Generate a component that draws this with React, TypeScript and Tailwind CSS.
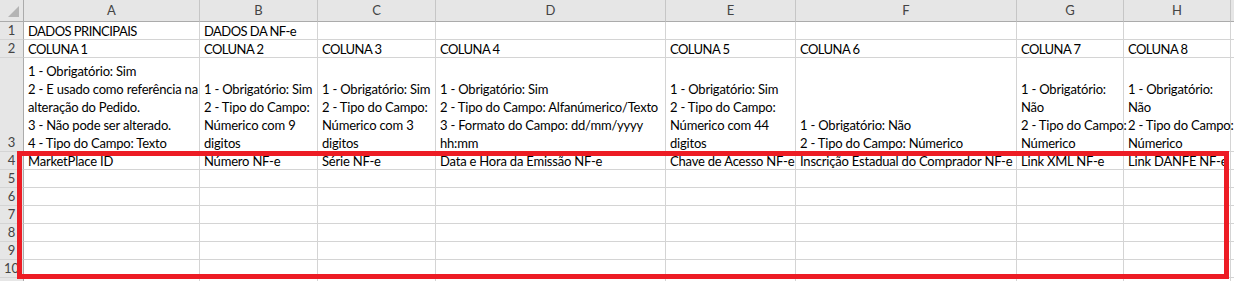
import React from "react";

const cols = ["A", "B", "C", "D", "E", "F", "G", "H"];

const row3: string[][] = [
  [
    "1 - Obrigatório: Sim",
    "2 - E usado como referência na",
    "alteração do Pedido.",
    "3 - Não pode ser alterado.",
    "4 - Tipo do Campo: Texto",
  ],
  ["1 - Obrigatório: Sim", "2 - Tipo do Campo:", "Númerico com 9", "digitos"],
  ["1 - Obrigatório: Sim", "2 - Tipo do Campo:", "Númerico com 3", "digitos"],
  [
    "1 - Obrigatório: Sim",
    "2 - Tipo do Campo: Alfanúmerico/Texto",
    "3 - Formato do Campo: dd/mm/yyyy",
    "hh:mm",
  ],
  ["1 - Obrigatório: Sim", "2 - Tipo do Campo:", "Númerico com 44", "digitos"],
  ["1 - Obrigatório: Não", "2 - Tipo do Campo: Númerico"],
  ["1 - Obrigatório:", "Não", "2 - Tipo do Campo:", "Númerico"],
  ["1 - Obrigatório:", "Não", "2 - Tipo do Campo:", "Númerico"],
];

const row1 = ["DADOS PRINCIPAIS", "DADOS DA NF-e", "", "", "", "", "", ""];
const row2 = cols.map((_, i) => `COLUNA ${i + 1}`);
const row4 = [
  "MarketPlace ID",
  "Número NF-e",
  "Série NF-e",
  "Data e Hora da Emissão NF-e",
  "Chave de Acesso NF-e",
  "Inscrição Estadual do Comprador NF-e",
  "Link XML NF-e",
  "Link DANFE NF-e",
];

function RowHead({ n, h }: { n: number | null; h: string }) {
  return (
    <div
      className={`${h} flex items-end justify-center border-r border-b border-r-[#ababab] border-b-[#d4d4d4] bg-[#e6e6e6] text-[#444] leading-[17px]`}
    >
      {n}
    </div>
  );
}

function Cell({ lines, h, caps }: { lines: string[]; h: string; caps?: boolean }) {
  return (
    <div
      className={`${h} flex flex-col justify-end overflow-visible whitespace-nowrap border-r border-b border-[#d4d4d4] pl-[4px] text-black leading-[18px] ${
        caps ? "tracking-[-0.55px]" : "tracking-[-0.2px]"
      }`}
    >
      <div className="translate-y-[1px]">
        {lines.map((l, i) => (
          <div key={i}>{l || "\u00a0"}</div>
        ))}
      </div>
    </div>
  );
}

export default function App() {
  const rowsSimple: { n: number; data: string[] }[] = [
    { n: 1, data: row1 },
    { n: 2, data: row2 },
  ];
  return (
    <div
      className="relative h-[281px] w-[1234px] overflow-hidden bg-white text-[13px]"
      style={{ fontFamily: "Lato, 'Noto Sans', sans-serif" }}
    >
      <div className="grid grid-cols-[24px_176px_118px_118px_230px_130px_221px_107px_107px_3px]">
        {/* header row */}
        <div className="relative h-[22px] border-r border-b border-[#ababab] bg-[#e6e6e6]">
          <svg className="absolute right-[4px] bottom-[4px]" width="11" height="11" viewBox="0 0 11 11">
            <polygon points="11,0 11,11 0,11" fill="#b4b4b4" />
          </svg>
        </div>
        {cols.map((c) => (
          <div
            key={c}
            className="flex h-[22px] items-center justify-center border-r border-b border-r-[#c6c6c6] border-b-[#ababab] bg-[#e6e6e6] pt-[1px] text-[#444]"
          >
            {c}
          </div>
        ))}
        <div className="h-[22px] border-b border-[#ababab] bg-[#e6e6e6]" />

        {rowsSimple.map((r) => (
          <React.Fragment key={r.n}>
            <RowHead n={r.n} h="h-[18px]" />
            {r.data.map((d, i) => (
              <Cell key={i} lines={[d]} h="h-[18px]" caps />
            ))}
            <div className="h-[18px] border-b border-[#d4d4d4]" />
          </React.Fragment>
        ))}

        <RowHead n={3} h="h-[94px]" />
        {row3.map((lines, i) => (
          <Cell key={i} lines={lines} h="h-[94px]" />
        ))}
        <div className="h-[94px] border-b border-[#d4d4d4]" />

        <RowHead n={4} h="h-[18px]" />
        {row4.map((d, i) => (
          <Cell key={i} lines={[d]} h="h-[18px]" />
        ))}
        <div className="h-[18px] border-b border-[#d4d4d4]" />

        {[5, 6, 7, 8, 9, 10, 11].map((n) => (
          <React.Fragment key={n}>
            <RowHead n={n === 11 ? null : n} h="h-[18px]" />
            {cols.map((c) => (
              <Cell key={c} lines={[""]} h="h-[18px]" />
            ))}
            <div className="h-[18px] border-b border-[#d4d4d4]" />
          </React.Fragment>
        ))}
      </div>

      {/* highlight rectangle */}
      <div className="pointer-events-none absolute left-[17px] top-[151px] h-[128px] w-[1212px] border-[5px] border-[#ed1c24]" />
    </div>
  );
}
